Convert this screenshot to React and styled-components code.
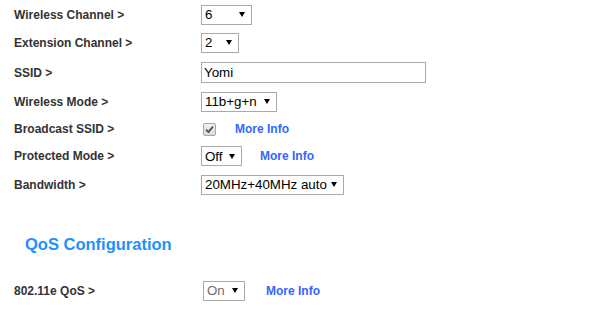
import React from 'react';
import styled, { createGlobalStyle } from 'styled-components';

const GlobalStyle = createGlobalStyle`
  body {
    margin: 0;
    background: #fff;
    font-family: "Liberation Sans", Arial, sans-serif;
  }
`;

const Page = styled.div`
  width: 591px;
  height: 322px;
  overflow: hidden;
  padding-left: 14px;
  box-sizing: border-box;
`;

const Row = styled.div`
  display: flex;
  align-items: center;
  height: ${(props) => props.$h}px;
`;

const Label = styled.div`
  width: 187px;
  flex-shrink: 0;
  font-size: 12px;
  font-weight: bold;
  color: #333;
`;

const Control = styled.div`
  display: flex;
  align-items: center;
  padding-left: ${(props) => props.$shift || 0}px;
`;

const SelectBox = styled.div`
  display: flex;
  align-items: center;
  justify-content: space-between;
  box-sizing: border-box;
  width: ${(props) => props.$w}px;
  height: 20px;
  padding: 0 6px 0 3px;
  border: 1px solid #a9a9a9;
  background: #fff;
  font-size: 13.33px;
  color: ${(props) => (props.$muted ? '#6d6d6d' : '#000')};
  white-space: nowrap;
`;

const Arrow = styled.span`
  width: 0;
  height: 0;
  border-left: 3px solid transparent;
  border-right: 3px solid transparent;
  border-top: 5px solid #000;
`;

const TextInput = styled.div`
  box-sizing: border-box;
  width: 225px;
  height: 21px;
  padding: 0 2px;
  border: 1px solid #a9a9a9;
  display: flex;
  align-items: center;
  font-size: 13.33px;
  color: #000;
`;

const CheckBox = styled.span`
  box-sizing: border-box;
  width: 13px;
  height: 13px;
  border: 1px solid #a6a6a6;
  border-radius: 2px;
  background: linear-gradient(#f2f2f2, #dadada);
  display: flex;
  align-items: center;
  justify-content: center;
`;

const InfoLink = styled.a`
  margin-left: ${(props) => props.$gap}px;
  font-size: 12px;
  font-weight: bold;
  color: #3366ff;
  text-decoration: none;
`;

const Heading = styled.h2`
  margin: 33px 0 21px 11px;
  font-size: 16.5px;
  line-height: 20px;
  font-weight: bold;
  color: #1e90ff;
`;

const Select = ({ value, width, muted }) => (
  <SelectBox $w={width} $muted={muted}>
    <span>{value}</span>
    <Arrow />
  </SelectBox>
);

export default function App() {
  return (
    <Page>
      <GlobalStyle />
      <Row $h={29}>
        <Label>Wireless Channel &gt;</Label>
        <Control>
          <Select value="6" width={51} />
        </Control>
      </Row>
      <Row $h={27}>
        <Label>Extension Channel &gt;</Label>
        <Control>
          <Select value="2" width={38} />
        </Control>
      </Row>
      <Row $h={33}>
        <Label>SSID &gt;</Label>
        <Control>
          <TextInput>Yomi</TextInput>
        </Control>
      </Row>
      <Row $h={25}>
        <Label>Wireless Mode &gt;</Label>
        <Control>
          <Select value="11b+g+n" width={76} />
        </Control>
      </Row>
      <Row $h={30}>
        <Label>Broadcast SSID &gt;</Label>
        <Control $shift={2}>
          <CheckBox>
            <svg width="9" height="9" viewBox="0 0 9 9">
              <path d="M1 4.6 L3.4 7 L8 1.6" fill="none" stroke="#4a4a4a" strokeWidth="1.7" />
            </svg>
          </CheckBox>
          <InfoLink $gap={19}>More Info</InfoLink>
        </Control>
      </Row>
      <Row $h={24}>
        <Label>Protected Mode &gt;</Label>
        <Control>
          <Select value="Off" width={41} />
          <InfoLink $gap={18}>More Info</InfoLink>
        </Control>
      </Row>
      <Row $h={33}>
        <Label>Bandwidth &gt;</Label>
        <Control>
          <Select value="20MHz+40MHz auto" width={143} />
        </Control>
      </Row>

      <Heading>QoS Configuration</Heading>

      <Row $h={31}>
        <Label>802.11e QoS &gt;</Label>
        <Control $shift={2}>
          <Select value="On" width={42} muted />
          <InfoLink $gap={21}>More Info</InfoLink>
        </Control>
      </Row>
    </Page>
  );
}
